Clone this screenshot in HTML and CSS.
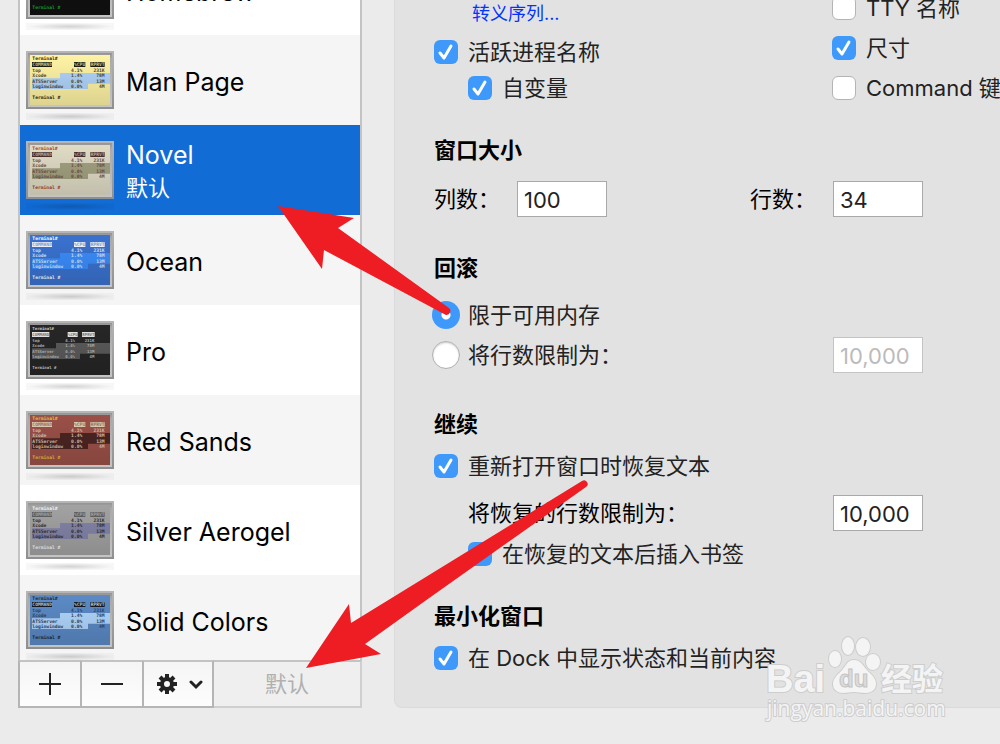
FILE: index.html
```html
<!DOCTYPE html>
<html lang="zh-CN">
  <head>
    <meta charset="UTF-8" />
    <meta name="viewport" content="width=device-width, initial-scale=1.0" />
    <title>描述文件</title>
    <link rel="stylesheet" href="styles.css" />
  </head>
  <body>
    <svg class="defs" aria-hidden="true">
      <defs>
        <linearGradient id="frame" x1="0" y1="0" x2="0" y2="1">
          <stop offset="0" stop-color="#b6b6b6" />
          <stop offset="1" stop-color="#8e8e8e" />
        </linearGradient>
        <linearGradient id="inner" x1="0" y1="0" x2="0" y2="1">
          <stop offset="0" stop-color="#949494" />
          <stop offset="0.1" stop-color="#a9a9a9" />
          <stop offset="1" stop-color="#c4c4c4" />
        </linearGradient>
        <linearGradient id="shade" x1="0" y1="0" x2="0" y2="1">
          <stop offset="0" stop-color="#000" stop-opacity="0" />
          <stop offset="1" stop-color="#000" stop-opacity="0.13" />
        </linearGradient>
        <radialGradient id="shadow">
          <stop offset="0" stop-color="#000" stop-opacity="0.17" />
          <stop offset="1" stop-color="#000" stop-opacity="0.03" />
        </radialGradient>
      </defs>
    </svg>

    <!-- 终端缩略图，颜色由各主题的变量决定 -->
    <template id="term">
      <svg class="thumb" viewBox="0 0 264 210">
        <rect width="264" height="174" fill="url(#frame)" />
        <rect x="6" y="6" width="252" height="162" fill="url(#inner)" />
        <rect class="scr" x="12" y="12" width="240" height="150" />
        <rect x="0" y="186" width="264" height="21" fill="url(#shadow)" />
        <path class="sel" d="M102 66H252V98H186V114H18V82H102z" />
        <path class="head" d="M18 33h60v15H18zM144 33h34v15h-34zM193 33h43v15h-43z" />
        <g class="mono">
          <text class="title" x="19" y="28">Terminal#</text>
          <g class="head-text">
            <text x="19" y="46">COMMAND</text>
            <text x="144" y="46">%CPU</text>
            <text x="194" y="46">RPRVT</text>
          </g>
          <g class="txt">
            <text x="19" y="62">top</text>
            <text x="19" y="78">Xcode</text>
            <text x="19" y="95">ATSServer</text>
            <text x="19" y="112">loginwindow</text>
          </g>
          <g class="txt" text-anchor="end">
            <text x="169" y="62">4.1%</text>
            <text x="169" y="78">1.4%</text>
            <text x="169" y="95">0.0%</text>
            <text x="169" y="112">0.0%</text>
            <text x="236" y="62">231K</text>
            <text x="236" y="78">78M</text>
            <text x="236" y="95">13M</text>
            <text x="236" y="112">4M</text>
          </g>
          <text class="title" x="19" y="145">Terminal #</text>
        </g>
        <rect x="12" y="12" width="240" height="150" fill="url(#shade)" />
      </svg>
    </template>

    <aside class="sidebar">
      <ul class="list">
        <li class="homebrew">
          <p class="name">Homebrew</p>
        </li>
        <li class="manpage">
          <p class="name">Man Page</p>
        </li>
        <li class="novel on">
          <p class="name">Novel<small>默认</small></p>
        </li>
        <li class="ocean">
          <p class="name">Ocean</p>
        </li>
        <li class="pro">
          <!-- Pro 的字体比较小 -->
          <svg class="thumb" viewBox="0 0 264 210">
            <rect width="264" height="174" fill="url(#frame)" />
            <rect x="6" y="6" width="252" height="162" fill="url(#inner)" />
            <rect class="scr" x="12" y="12" width="240" height="150" />
            <rect x="0" y="186" width="264" height="21" fill="url(#shadow)" />
            <path class="sel" d="M90 66H252V98H162V114H18V82H90z" />
            <path class="head" d="M18 33h52v15H18zM125 33h30v15h-30zM168 33h38v15h-38z" />
            <g class="mono small">
              <text class="title" x="19" y="28">Terminal#</text>
              <g class="head-text">
                <text x="19" y="46">COMMAND</text>
                <text x="126" y="46">%CPU</text>
                <text x="169" y="46">RPRVT</text>
              </g>
              <g class="txt">
                <text x="19" y="62">top</text>
                <text x="19" y="78">Xcode</text>
                <text x="19" y="95">ATSServer</text>
                <text x="19" y="112">loginwindow</text>
              </g>
              <g class="txt" text-anchor="end">
                <text x="147" y="62">4.1%</text>
                <text x="147" y="78">1.4%</text>
                <text x="147" y="95">0.0%</text>
                <text x="147" y="112">0.0%</text>
                <text x="205" y="62">231K</text>
                <text x="205" y="78">78M</text>
                <text x="205" y="95">13M</text>
                <text x="205" y="112">4M</text>
              </g>
              <text class="title" x="19" y="145">Terminal #</text>
            </g>
            <rect x="12" y="12" width="240" height="150" fill="url(#shade)" />
          </svg>
          <p class="name">Pro</p>
        </li>
        <li class="redsands">
          <p class="name">Red Sands</p>
        </li>
        <li class="silver">
          <p class="name">Silver Aerogel</p>
        </li>
        <li class="solid">
          <p class="name">Solid Colors</p>
        </li>
      </ul>
      <div class="toolbar">
        <button type="button" aria-label="添加">
          <svg width="22" height="22" viewBox="0 0 22 22"><path d="M11 0v22M0 11h22" stroke="#222" stroke-width="2" /></svg>
        </button>
        <button type="button" aria-label="移除">
          <svg width="22" height="22" viewBox="0 0 22 22"><path d="M0 11h22" stroke="#222" stroke-width="2" /></svg>
        </button>
        <button type="button" class="gear" aria-label="操作">
          <svg width="20" height="20" viewBox="0 0 20 20">
            <g stroke="#222" stroke-width="4">
              <path d="M10 0v5M10 15v5M0 10h5M15 10h5M3 3l4 4M13 13l4 4M17 3l-4 4M7 13l-4 4" />
              <circle cx="10" cy="10" r="5" fill="none" />
            </g>
          </svg>
          <svg width="14" height="20" viewBox="0 0 14 20">
            <path d="M2 8l5 5 5-5" fill="none" stroke="#222" stroke-width="3" stroke-linecap="round" />
          </svg>
        </button>
        <button type="button" class="default" disabled>默认</button>
      </div>
    </aside>

    <main class="panel">
      <div class="columns">
        <div class="left">
          <a class="escape" href="#">转义序列...</a>
          <label><input type="checkbox" checked />活跃进程名称</label>
          <label class="indent"><input type="checkbox" checked />自变量</label>
        </div>
        <div class="right">
          <label><input type="checkbox" />TTY 名称</label>
          <label><input type="checkbox" checked />尺寸</label>
          <label><input type="checkbox" />Command 键</label>
        </div>
      </div>

      <section class="size">
        <h2>窗口大小</h2>
        <div class="row">
          <label for="cols">列数：</label>
          <input type="text" id="cols" value="100" />
          <label for="rows" class="second">行数：</label>
          <input type="text" id="rows" value="34" />
        </div>
      </section>

      <section class="scrollback">
        <h2>回滚</h2>
        <label><input type="radio" name="scroll" checked />限于可用内存</label>
        <div class="row">
          <label class="wide"><input type="radio" name="scroll" />将行数限制为：</label>
          <input type="text" aria-label="行数限制" value="10,000" disabled />
        </div>
      </section>

      <section class="resume">
        <h2>继续</h2>
        <label><input type="checkbox" checked />重新打开窗口时恢复文本</label>
        <div class="row limit">
          <label for="restore" class="wide indent">将恢复的行数限制为：</label>
          <input type="text" id="restore" value="10,000" />
        </div>
        <label class="indent"><input type="checkbox" checked />在恢复的文本后插入书签</label>
      </section>

      <section class="minimize">
        <h2>最小化窗口</h2>
        <label><input type="checkbox" checked />在 Dock 中显示状态和当前内容</label>
      </section>
    </main>

    <!-- 红色箭头 -->
    <svg class="arrows" viewBox="270 200 330 480" aria-hidden="true">
      <path d="M278 206L354 218 338 228 449 308A4 4 0 0 1 446 315L324 250 322 269z" />
      <path d="M306 668L349 604 351 623 582 481A3 3 0 0 1 586 487L425 601 365 644 381 654z" />
    </svg>

    <!-- 水印 -->
    <svg class="watermark" viewBox="760 630 190 100" aria-hidden="true">
      <g class="mark">
        <text class="bai" x="766" y="692">Bai</text>
        <ellipse cx="835" cy="659" rx="6" ry="8" />
        <ellipse cx="848" cy="646" rx="6" ry="9" />
        <ellipse cx="863" cy="647" rx="7" ry="9" />
        <ellipse cx="873" cy="662" rx="7" ry="8" />
        <path d="M854 660c-6 0-8 5-11 9-4 5-10 8-10 15 0 6 5 9 10 9 4 0 7-1 11-1s7 1 11 1c6 0 11-3 11-9 0-7-6-10-10-15-3-4-6-9-12-9z" />
        <text class="cn" x="881" y="690">经验</text>
        <text class="site" x="767" y="716">jingyan.baidu.com</text>
      </g>
      <text class="du" x="839" y="687">du</text>
    </svg>

    <script>
      const term = document.querySelector("#term");
      const items = document.querySelectorAll(".list > li:not(.pro)");
      for (let i = 0; i < items.length; i++) {
        items[i].prepend(term.content.cloneNode(true));
      }
    </script>
  </body>
</html>
```

FILE: styles.css
```css
* {
  box-sizing: border-box;
}
body {
  margin: 0;
  padding: 0 0 36px 18px;
  height: 100vh;
  display: flex;
  position: relative;
  overflow: hidden;
  background-color: #ebebeb;
  color: #000;
  font-family: Inter, "Noto Sans CJK SC", sans-serif;
  font-size: 22px;
}
.defs {
  position: absolute;
  width: 0;
  height: 0;
}

/* 左侧列表 */
.sidebar {
  flex: 0 0 344px;
  display: flex;
  flex-direction: column;
}
.list {
  flex: 1;
  min-height: 0;
  margin: 0;
  padding: 0;
  list-style: none;
  overflow: hidden;
  border-left: 2px solid #c3c3c3;
  border-right: 2px solid #c3c3c3;
}
.list > li {
  display: flex;
  align-items: center;
  height: 90px;
  padding-left: 6px;
  background-color: #fff;
}
.list > li:first-child {
  margin-top: -55px;
}
.list > li:nth-child(even) {
  background-color: #f5f5f5;
}
.list > .on {
  background-color: #116cd6;
  color: #fff;
}
.thumb {
  width: 88px;
  height: 70px;
  margin-top: 12px;
}
.name {
  margin: 0 0 0 12px;
  font-size: 25px;
  line-height: 34px;
  padding-top: 4px;
}
.name small {
  display: block;
  font-size: 22px;
  line-height: 32px;
}
.on .name {
  padding-top: 2px;
}

/* 缩略图 */
.mono {
  font-family: "DejaVu Sans Mono", monospace;
  font-size: 14px;
  font-weight: bold;
}
.small {
  font-size: 12px;
}
.scr {
  fill: var(--bg);
}
.sel {
  fill: var(--sel);
}
.head {
  fill: var(--head);
}
.head-text {
  fill: var(--head-text);
}
.title {
  fill: var(--title);
}
.txt {
  fill: var(--txt);
}
.homebrew {
  --bg: #111;
  --sel: #083905;
  --head: #28c23a;
  --head-text: #111;
  --title: #1aa52c;
  --txt: #1aa52c;
}
.manpage {
  --bg: #fef3a4;
  --sel: #b0d4fa;
  --head: #1e1d14;
  --head-text: #cfc68a;
  --title: #2a2810;
  --txt: #4c4a35;
}
.novel {
  --bg: #dfdbc5;
  --sel: #a2a180;
  --head: #4c2f2d;
  --head-text: #b9a99c;
  --title: #a8402f;
  --txt: #6e5048;
}
.ocean {
  --bg: #3a72cf;
  --sel: #3a8cfa;
  --head: #f2f5fb;
  --head-text: #7f9fd6;
  --title: #fff;
  --txt: #d5e3fa;
}
.pro {
  --bg: #262626;
  --sel: #5a5a5a;
  --head: #e6e6e6;
  --head-text: #777;
  --title: #ccc;
  --txt: #b5b5b5;
}
.redsands {
  --bg: #9a5048;
  --sel: #4b2522;
  --head: #ddcdb3;
  --head-text: #9b7560;
  --title: #e8bd3d;
  --txt: #d9c0ac;
}
.silver {
  --bg: #a2a2a2;
  --sel: #8383a8;
  --head: #606060;
  --head-text: #a2a2a2;
  --title: #f4f4f4;
  --txt: #303030;
}
.solid {
  --bg: #5b8ac5;
  --sel: #b0d5fc;
  --head: #15191f;
  --head-text: #b5c5da;
  --title: #172740;
  --txt: #2c4566;
}

/* 底部按钮 */
.toolbar {
  display: flex;
  height: 48px;
}
.toolbar button {
  display: flex;
  align-items: center;
  justify-content: center;
  width: 62px;
  padding: 0;
  border: solid #b5b5b5;
  border-width: 2px 0 2px 2px;
  border-top-color: #c3c3c3;
  background: linear-gradient(#f5f5f5, #fdfdfd);
  font: inherit;
}
.toolbar .gear {
  width: 72px;
  gap: 12px;
  border-right-width: 2px;
  padding-left: 4px;
}
.toolbar .default {
  flex: 1;
  padding-bottom: 4px;
  border-color: #c3c3c3 #cfcfcf #cfcfcf;
  border-width: 2px 2px 2px 0;
  background: #efefef;
  color: #b0b0b0;
}

/* 右侧设置 */
.panel {
  flex: 1;
  min-width: 0;
  margin-left: 32px;
  padding-left: 39px;
  border-left: 1px solid #dadada;
  border-bottom: 1px solid #dadada;
  border-bottom-left-radius: 8px;
  background-color: #e2e2e2;
  white-space: nowrap;
}
.panel label {
  display: flex;
  align-items: center;
  height: 40px;
  padding-bottom: 4px;
  color: #222;
}
.panel .indent {
  padding-left: 34px;
}
.columns {
  display: flex;
}
.left {
  flex: none;
  width: 398px;
}
.left label {
  height: 36px;
}
.right {
  margin-top: -12px;
}
.escape {
  display: block;
  padding-left: 38px;
  margin-bottom: 6px;
  font-size: 18px;
  line-height: 28px;
  color: #0433ff;
  text-decoration: none;
}
h2 {
  margin: 0;
  font-size: 22px;
  line-height: 30px;
}
.row {
  display: flex;
  align-items: center;
}
.size {
  margin-top: 27px;
}
.size .row {
  margin-top: 14px;
}
.size label {
  width: 83px;
  color: #000;
}
.size .second {
  margin-left: 143px;
}
.scrollback {
  margin-top: 34px;
}
.scrollback h2 {
  margin-bottom: 12px;
}
.wide {
  width: 399px;
}
.resume {
  margin-top: 34px;
}
.resume h2,
.minimize h2 {
  margin-bottom: 7px;
}
.limit {
  padding: 7px 0 1px;
}
.limit label {
  color: #000;
}
.minimize {
  margin-top: 27px;
}

input[type="text"] {
  width: 90px;
  height: 36px;
  padding: 2px 6px 0;
  border: 1px solid #a9a9a9;
  border-radius: 0;
  background-color: #fff;
  color: #222;
  font: inherit;
}
input[type="text"]:disabled {
  border-color: #c4c4c4;
  color: #bbb;
}
/* 上边距抵消 label 的下内边距，保持居中 */
input[type="checkbox"] {
  appearance: none;
  width: 24px;
  height: 24px;
  margin: 4px 10px 0 0;
  border: 1px solid #b4b4b4;
  border-radius: 6px;
  background-color: #fff;
}
input[type="checkbox"]:checked {
  border: none;
  background: #3f99fa url("data:image/svg+xml,%3Csvg xmlns='http://www.w3.org/2000/svg' viewBox='0 0 24 24'%3E%3Cpath d='M6 13l4 5 7-12' fill='none' stroke='white' stroke-width='3' stroke-linecap='round' stroke-linejoin='round'/%3E%3C/svg%3E");
}
input[type="radio"] {
  appearance: none;
  width: 28px;
  height: 28px;
  margin: 4px 8px 0 -2px;
  border: 1px solid #b0b0b0;
  border-radius: 50%;
  background-color: #fff;
  box-shadow: inset 0 1px 2px #ccc;
}
input[type="radio"]:checked {
  border: none;
  background: radial-gradient(circle, #fff 4px, #3f99fa 5px);
  box-shadow: none;
}

/* 箭头和水印浮在页面上面 */
.arrows {
  position: absolute;
  left: 270px;
  top: 200px;
  width: 330px;
  height: 480px;
  fill: #ee1c23;
  pointer-events: none;
}
.watermark {
  position: absolute;
  left: 760px;
  top: 630px;
  width: 190px;
  height: 100px;
  pointer-events: none;
}
.mark {
  fill: #f4f4f4;
  stroke: #cdcdcd;
  stroke-width: 2px;
  paint-order: stroke;
}
.bai {
  font: bold 38px "Liberation Sans", sans-serif;
}
.cn {
  font: bold 31px "Noto Sans CJK SC", sans-serif;
}
.site {
  font: 21px "Open Sans", sans-serif;
}
.du {
  font: bold 24px "Liberation Sans", sans-serif;
  fill: #dcdcdc;
  stroke: #c4c4c4;
  stroke-width: 1px;
}
```
